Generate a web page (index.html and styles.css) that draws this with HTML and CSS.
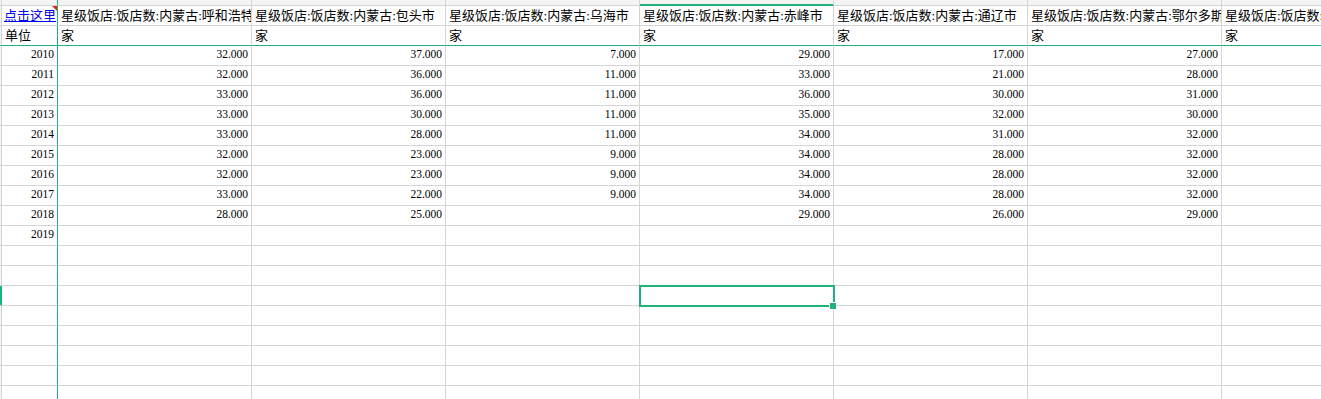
FILE: index.html
```html
<!DOCTYPE html>
<html lang="zh-CN">
<head>
<meta charset="utf-8">
<title>Sheet</title>
<link rel="stylesheet" href="styles.css">
</head>
<body>
<div class="sheet">
  <div class="rh hd"></div><div class="ch fz"></div><div class="ch"></div><div class="ch"></div><div class="ch"></div><div class="ch sel"></div><div class="ch"></div><div class="ch"></div><div class="ch"></div>

  <div class="rh"></div>
  <div class="c t fz note"><a class="lnk" href="#">点击这里</a></div>
  <div class="c t">星级饭店:饭店数:内蒙古:呼和浩特市</div>
  <div class="c t">星级饭店:饭店数:内蒙古:包头市</div>
  <div class="c t">星级饭店:饭店数:内蒙古:乌海市</div>
  <div class="c t">星级饭店:饭店数:内蒙古:赤峰市</div>
  <div class="c t">星级饭店:饭店数:内蒙古:通辽市</div>
  <div class="c t">星级饭店:饭店数:内蒙古:鄂尔多斯市</div>
  <div class="c t">星级饭店:饭店数:内蒙古:呼伦贝尔市</div>

  <div class="rh fb"></div>
  <div class="c t fz fb">单位</div>
  <div class="c t fb">家</div><div class="c t fb">家</div><div class="c t fb">家</div><div class="c t fb">家</div><div class="c t fb">家</div><div class="c t fb">家</div><div class="c t fb">家</div>

  <div class="rh"></div><div class="c n fz">2010</div><div class="c n">32.000</div><div class="c n">37.000</div><div class="c n">7.000</div><div class="c n">29.000</div><div class="c n">17.000</div><div class="c n">27.000</div><div class="c"></div>
  <div class="rh"></div><div class="c n fz">2011</div><div class="c n">32.000</div><div class="c n">36.000</div><div class="c n">11.000</div><div class="c n">33.000</div><div class="c n">21.000</div><div class="c n">28.000</div><div class="c"></div>
  <div class="rh"></div><div class="c n fz">2012</div><div class="c n">33.000</div><div class="c n">36.000</div><div class="c n">11.000</div><div class="c n">36.000</div><div class="c n">30.000</div><div class="c n">31.000</div><div class="c"></div>
  <div class="rh"></div><div class="c n fz">2013</div><div class="c n">33.000</div><div class="c n">30.000</div><div class="c n">11.000</div><div class="c n">35.000</div><div class="c n">32.000</div><div class="c n">30.000</div><div class="c"></div>
  <div class="rh"></div><div class="c n fz">2014</div><div class="c n">33.000</div><div class="c n">28.000</div><div class="c n">11.000</div><div class="c n">34.000</div><div class="c n">31.000</div><div class="c n">32.000</div><div class="c"></div>
  <div class="rh"></div><div class="c n fz">2015</div><div class="c n">32.000</div><div class="c n">23.000</div><div class="c n">9.000</div><div class="c n">34.000</div><div class="c n">28.000</div><div class="c n">32.000</div><div class="c"></div>
  <div class="rh"></div><div class="c n fz">2016</div><div class="c n">32.000</div><div class="c n">23.000</div><div class="c n">9.000</div><div class="c n">34.000</div><div class="c n">28.000</div><div class="c n">32.000</div><div class="c"></div>
  <div class="rh"></div><div class="c n fz">2017</div><div class="c n">33.000</div><div class="c n">22.000</div><div class="c n">9.000</div><div class="c n">34.000</div><div class="c n">28.000</div><div class="c n">32.000</div><div class="c"></div>
  <div class="rh"></div><div class="c n fz">2018</div><div class="c n">28.000</div><div class="c n">25.000</div><div class="c n"></div><div class="c n">29.000</div><div class="c n">26.000</div><div class="c n">29.000</div><div class="c"></div>
  <div class="rh"></div><div class="c n fz">2019</div><div class="c"></div><div class="c"></div><div class="c"></div><div class="c"></div><div class="c"></div><div class="c"></div><div class="c"></div>

  <div class="rh"></div><div class="c fz"></div><div class="c"></div><div class="c"></div><div class="c"></div><div class="c"></div><div class="c"></div><div class="c"></div><div class="c"></div>
  <div class="rh"></div><div class="c fz"></div><div class="c"></div><div class="c"></div><div class="c"></div><div class="c"></div><div class="c"></div><div class="c"></div><div class="c"></div>
  <div class="rh rsel"></div><div class="c fz"></div><div class="c"></div><div class="c"></div><div class="c"></div><div class="c active"><div class="cursor"><span class="handle"></span></div></div><div class="c"></div><div class="c"></div><div class="c"></div>
  <div class="rh"></div><div class="c fz"></div><div class="c"></div><div class="c"></div><div class="c"></div><div class="c"></div><div class="c"></div><div class="c"></div><div class="c"></div>
  <div class="rh"></div><div class="c fz"></div><div class="c"></div><div class="c"></div><div class="c"></div><div class="c"></div><div class="c"></div><div class="c"></div><div class="c"></div>
  <div class="rh"></div><div class="c fz"></div><div class="c"></div><div class="c"></div><div class="c"></div><div class="c"></div><div class="c"></div><div class="c"></div><div class="c"></div>
  <div class="rh"></div><div class="c fz"></div><div class="c"></div><div class="c"></div><div class="c"></div><div class="c"></div><div class="c"></div><div class="c"></div><div class="c"></div>
  <div class="rh"></div><div class="c fz"></div><div class="c"></div><div class="c"></div><div class="c"></div><div class="c"></div><div class="c"></div><div class="c"></div><div class="c"></div>
</div>
</body>
</html>
```

FILE: styles.css
```css
html, body {
  margin: 0;
  padding: 0;
  background: #ffffff;
  overflow: hidden;
}

body {
  width: 1321px;
  height: 399px;
}

.sheet {
  display: grid;
  grid-template-columns: 2px 56px repeat(7, 194px);
  grid-template-rows: 6px;
  grid-auto-rows: 20px;
  font-family: "Liberation Serif", "Noto Sans CJK SC", serif;
  color: #000000;
}

.sheet > div {
  box-sizing: border-box;
  border-right: 1px solid #d5d5d5;
  border-bottom: 1px solid #d5d5d5;
  overflow: hidden;
  white-space: nowrap;
}

.rh {
  background: #f4f4f4;
}

.ch {
  background: #f4f4f4;
}

.ch.sel {
  border-bottom-color: #20b27a;
  box-shadow: inset 0 -1px 0 #20b27a;
}

.c {
  background: #ffffff;
}

.t {
  font-size: 13px;
  line-height: 19px;
  padding-left: 3px;
}

.n {
  font-size: 11.5px;
  line-height: 16px;
  text-align: right;
  padding-right: 3px;
}

.sheet > .fz {
  border-right-color: #20b27a;
}

.sheet > .fb {
  border-bottom-color: #20b27a;
}

.note {
  position: relative;
  padding-left: 2px;
}

.note::after {
  content: "";
  position: absolute;
  top: 0;
  right: 0;
  border-top: 5px solid #e8231c;
  border-left: 5px solid transparent;
}

.lnk {
  color: #0000ee;
  text-decoration: underline;
}

.sheet > .rsel {
  background: #20b27a;
  border-right-color: #20b27a;
}

.active {
  position: relative;
  overflow: visible !important;
}

.cursor {
  position: absolute;
  left: -1px;
  top: -1px;
  width: 196px;
  height: 22px;
  box-sizing: border-box;
  border: 2px solid #20b27a;
  z-index: 2;
}

.handle {
  position: absolute;
  right: -4px;
  bottom: -5px;
  width: 6px;
  height: 6px;
  background: #20b27a;
  border: 1px solid #ffffff;
}
```
